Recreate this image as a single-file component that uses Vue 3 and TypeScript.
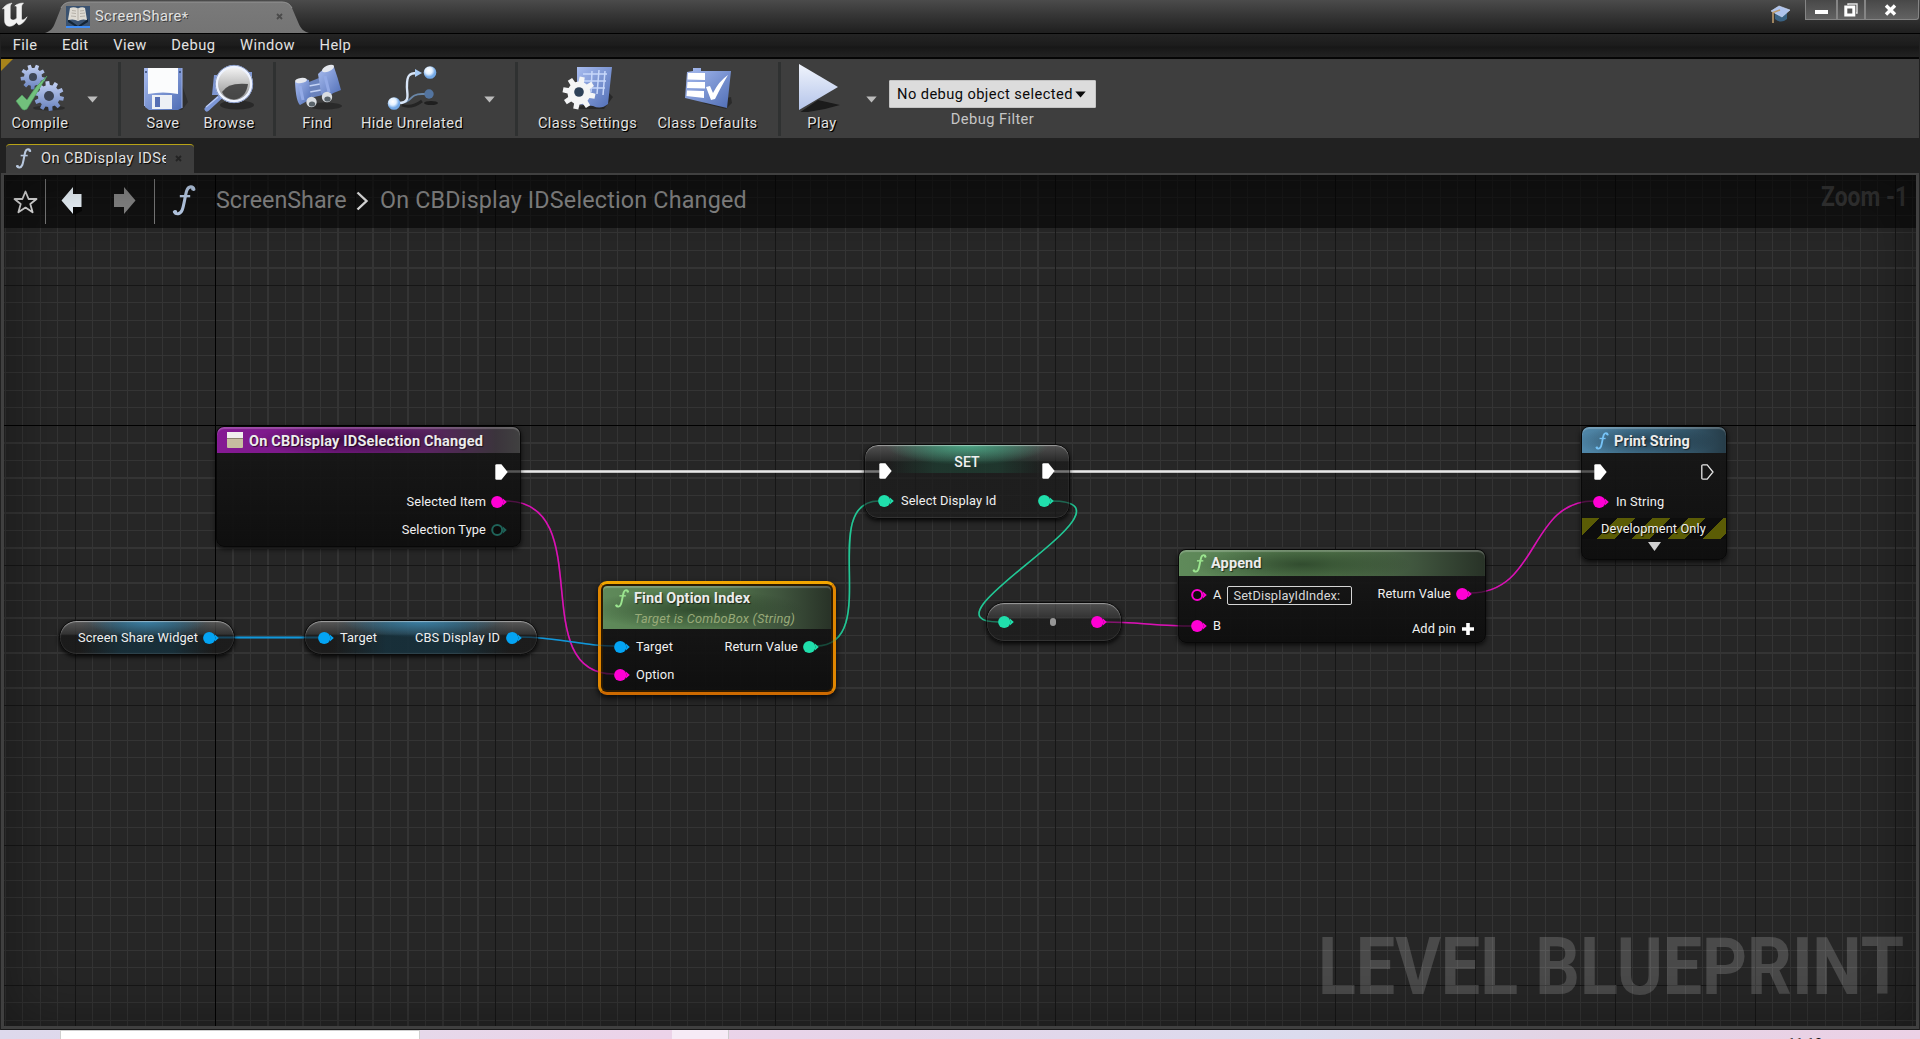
<script setup lang="ts">
interface Wire { d: string; color: string; width: number }

const menus: string[] = ['File', 'Edit', 'View', 'Debug', 'Window', 'Help']

const wires: Wire[] = [
  { d: 'M507 471.500H880', color: '#e8e8e8', width: 2.6 },
  { d: 'M1054 471.500H1595', color: '#e8e8e8', width: 2.6 },
  { d: 'M505 501C600 501 524 674 614 674', color: '#d912b4', width: 1.6 },
  { d: 'M217 637.500H319', color: '#1296d8', width: 1.8 },
  { d: 'M519 637C560 637 580 646 614 646', color: '#1296d8', width: 1.6 },
  { d: 'M816 646C884 646 816 501 879 501', color: '#22c795', width: 1.6 },
  { d: 'M1051 501C1153 501 910 622 999 622', color: '#22c795', width: 1.6 },
  { d: 'M1105 622C1135 622 1160 626 1192 626', color: '#d912b4', width: 1.6 },
  { d: 'M1470 593C1540 593 1528 501 1594 501', color: '#d912b4', width: 1.6 },
]

/* closed outline of a cog with the given centre, radii and tooth count */
function cog(cx: number, cy: number, outer: number, inner: number, teeth: number): string {
  const step = (Math.PI * 2) / teeth
  const pts: string[] = []
  for (let i = 0; i < teeth; i++) {
    const a = i * step + 0.2
    const corners: [number, number][] = [[-0.31, inner], [-0.2, outer], [0.2, outer], [0.31, inner]]
    for (const [k, r] of corners) {
      pts.push(`${(cx + r * Math.cos(a + k * step)).toFixed(1)} ${(cy + r * Math.sin(a + k * step)).toFixed(1)}`)
    }
  }
  return `M${pts.join('L')}Z`
}
</script>

<template>
  <div class="editor">
    <svg class="defs" width="0" height="0">
      <defs>
        <linearGradient id="steel" x1="0" y1="0" x2="0" y2="1"><stop offset="0" stop-color="#c6d3f4" /><stop offset="1" stop-color="#6680bd" /></linearGradient>
        <linearGradient id="blue" x1="0" y1="0" x2="1" y2="1"><stop offset="0" stop-color="#a9bdf0" /><stop offset="1" stop-color="#4f6db5" /></linearGradient>
        <linearGradient id="pale" x1="0" y1="0" x2="0" y2="1"><stop offset="0" stop-color="#f0f4fc" /><stop offset="1" stop-color="#b4c4ea" /></linearGradient>
        <linearGradient id="lens" x1="0" y1="0" x2="0" y2="1"><stop offset="0" stop-color="#f6f6f6" /><stop offset="1" stop-color="#8b8b8b" /></linearGradient>
        <radialGradient id="ball" cx=".4" cy=".35"><stop offset="0" stop-color="#fff" /><stop offset=".55" stop-color="#e2f0ff" /><stop offset="1" stop-color="#74a9e6" /></radialGradient>
      </defs>
      <symbol id="pin" viewBox="0 0 16 14"><circle cx="6.2" cy="7" r="6.1" fill="currentColor" /><path d="M11.6 3.2L15.8 7L11.6 10.8Q13.2 7 11.6 3.2Z" fill="currentColor" /></symbol>
      <symbol id="pin-open" viewBox="0 0 16 14"><circle cx="6.2" cy="7" r="5" fill="#0b0b0b" stroke="currentColor" stroke-width="2" /><path d="M11.6 3.2L15.8 7L11.6 10.8Q13.2 7 11.6 3.2Z" fill="currentColor" /></symbol>
      <symbol id="exec" viewBox="0 0 13 16"><path d="M.3 1.6Q.3.3 1.6.3H6.4L12.7 8L6.4 15.7H1.6Q.3 15.7.3 14.4Z" fill="#fff" /></symbol>
      <symbol id="func" viewBox="0 0 14 20"><path d="M13.4 2.8C12.8 .6 9.9 .5 8.8 3.5C7.8 6.3 7 13.4 5.8 16.2C4.6 19 1.8 19.2 .8 17.4" fill="none" stroke="currentColor" stroke-width="2" stroke-linecap="round" /><path d="M4.3 7.2H11" stroke="currentColor" stroke-width="1.5" /><circle cx="12.7" cy="2.5" r="1.1" fill="currentColor" /><circle cx="1.5" cy="17.3" r="1.1" fill="currentColor" /></symbol>
      <symbol id="caret" viewBox="0 0 11 7"><path d="M.3.5H10.7L5.5 6.5Z" fill="currentColor" /></symbol>
    </svg>

    <header class="titlebar">
      <svg class="logo" width="27" height="27" viewBox="0 0 27 27"><path d="M1.500 9C4 5 7.500 3.500 11 3.200C9.500 4.500 9.200 5.500 9.200 7V17.500C9.200 20.500 13.500 21 15.800 18V7.500C15.800 6.200 15 5.700 13.800 6C15.500 4.300 18.500 3.200 22.500 3C21.200 4.300 20.500 5.400 20.500 7V18C20.500 20.800 22.800 20.700 26 16.800C24.200 21.400 21 24 17.800 25L15.400 22.600C13.400 25.300 10.400 26.500 8 26.200C5.200 25.900 3.600 23.800 3.600 20.500V10.400C3.600 8.400 2.600 8.200 1.500 9Z" fill="#f2f2f2" stroke="#f2f2f2" stroke-width=".6" /></svg>
      <div class="doc-tab">
        <svg class="doc-shape" width="264" height="33" viewBox="0 0 264 33">
          <defs><linearGradient id="tabfill" x1="0" y1="0" x2="0" y2="1"><stop offset="0" stop-color="#7a7a7a" /><stop offset="1" stop-color="#747474" /></linearGradient></defs>
          <path d="M0 33C6 31 8 28 10 23L16 8Q19 2 26 2H237Q244 2 247 8L253 22C256 29 258 31 264 33Z" fill="url(#tabfill)" />
          <path d="M16 8Q19 2 26 2H237Q244 2 247 8" fill="none" stroke="#949494" />
        </svg>
        <svg class="doc-icon" width="24" height="22" viewBox="0 0 24 22"><rect width="24" height="22" fill="#3a5270" /><path d="M2 13L12 20L22 13V16L12 22L2 16Z" fill="#142536" /><path d="M4 2Q8 .5 12 2.5Q16 .5 19 2L21 14Q16 12.5 12 15Q8 12.5 2 14Z" fill="#dedbd3" /><path d="M12 3V14M6 4.5L10 5M5.500 7L10 7.500M5 10L10 10.500M14 5L18 4.500M14 7.500L19 7M14 10.500L19 10" stroke="#a9a59c" stroke-width=".8" /><path d="M0 21H24" stroke="#3f8df5" stroke-width="2" /></svg>
        <span class="doc-name">ScreenShare<i class="star">*</i></span>
        <svg class="doc-close" width="7" height="7" viewBox="0 0 7 7"><path d="M1 1L6 6M6 1L1 6" stroke="#4b4b4b" stroke-width="1.8" /></svg>
      </div>
      <div class="spacer"></div>
      <svg class="cap" width="20" height="20" viewBox="0 0 20 20"><path d="M4 8L4 14Q10 19 16 14V8Z" fill="#3a6283" /><path d="M0 6L8 1L19 5L11 12Z" fill="#afc4ee" stroke="#d4e0fa" stroke-width=".6" /><path d="M9 5L2 7.5V18" fill="none" stroke="#bb9a6b" stroke-width="1.6" /></svg>
      <div class="window-buttons">
        <span class="wb min"><svg width="13" height="4"><rect width="13" height="4" fill="#fff" /></svg></span>
        <span class="wb max"><svg width="14" height="14" viewBox="0 0 14 14"><path d="M4 2V1H13V10H12" fill="none" stroke="#e3e3e3" stroke-width="1.4" /><rect x="1.8" y="4" width="8" height="8" fill="none" stroke="#fff" stroke-width="3" /></svg></span>
        <span class="wb close"><svg width="13" height="12" viewBox="0 0 13 12"><path d="M2 1.5L11 10.5M11 1.5L2 10.5" stroke="#fff" stroke-width="3.4" /></svg></span>
      </div>
    </header>

    <nav class="menu"><span v-for="m in menus" :key="m">{{ m }}</span></nav>

    <section class="toolbar">
      <svg class="dirty" width="13" height="13"><path d="M0 0H12L0 12Z" fill="#a8841b" /></svg>
      <div class="tool w80">
        <svg width="52" height="50" viewBox="0 0 52 50"><ellipse cx="35" cy="46" rx="16" ry="2.5" fill="#222" opacity=".6" /><path :d="cog(19, 15, 12.5, 9, 9)" fill="url(#steel)" /><circle cx="19" cy="15" r="4" fill="#3f4858" /><path :d="cog(35, 34, 15, 11, 10)" fill="url(#steel)" /><circle cx="35" cy="34" r="5" fill="#3b4252" /><path d="M2 39L8 33L13 38Q22 23 33 14Q24 29 13 47Q10 49 8 47Z" fill="#72c07c" stroke="#4d9e60" stroke-width=".6" /></svg>
        <span>Compile</span>
      </div>
      <div class="drop"><svg width="11" height="7"><use href="#caret" /></svg></div>
      <i class="sep s1"></i>
      <div class="tool w66 m9">
        <svg width="52" height="50" viewBox="0 0 52 50"><path d="M44 20L51 40L45 48H14Z" fill="#222" opacity=".55" /><path d="M7 6H45V46L41 48H12L8 45Z" fill="url(#blue)" /><path d="M11 6H41V32Q26 29 11 32Z" fill="#fbfcfd" /><rect x="15" y="33" width="20" height="14" fill="#edf0f5" /><rect x="18" y="35" width="5" height="10" fill="#566fb4" /><path d="M7.5 6V44M45 6V46" stroke="#9fb1e4" stroke-width="1" /><circle cx="9" cy="10" r="1" fill="#31466f" /><circle cx="43" cy="10" r="1" fill="#31466f" /></svg>
        <span>Save</span>
      </div>
      <div class="tool w66">
        <svg width="52" height="50" viewBox="0 0 52 50"><ellipse cx="34" cy="43" rx="17" ry="4.5" fill="#1e1e1e" opacity=".65" /><path d="M11 13H17V33H9Z M42 10H49V27L43 30Z" fill="#7e96d2" /><path d="M4 47L17 35" stroke="#7d97d7" stroke-width="5" stroke-linecap="round" /><path d="M3 45L15 35" stroke="#b8c9f5" stroke-width="1.3" /><circle cx="31" cy="22" r="17.5" fill="url(#lens)" stroke="#eef3ff" stroke-width="3" /><circle cx="31" cy="22" r="18.7" fill="none" stroke="#7188bd" stroke-width=".8" /><path d="M19 30Q25 20 45 22Q43 36 31 37.5Q22 37 19 30Z" fill="#383838" opacity=".85" /></svg>
        <span>Browse</span>
      </div>
      <i class="sep s2"></i>
      <div class="tool w66 m8">
        <svg width="52" height="50" viewBox="0 0 52 50"><ellipse cx="34" cy="44" rx="17" ry="3.5" fill="#222" opacity=".7" /><path d="M18 20L28 16L32 33L19 36Z" fill="#6a83bd" /><path d="M18 24L29 22M19 30L30 28" stroke="#c4d3f5" stroke-width="1.5" /><path d="M27 12Q34 4 43 5Q47 16 50 28Q43 30 36 35Q31 34 30 31Z" fill="url(#blue)" /><path d="M4 20Q10 15 18 18Q19 28 20 37L9 43Q5 40 4 20Z" fill="url(#blue)" /><ellipse cx="10" cy="18.500" rx="6" ry="2.600" fill="#e5e8ee" transform="rotate(-8 10 18.500)" /><ellipse cx="37" cy="6.500" rx="6.500" ry="3" fill="#e5e8ee" transform="rotate(-24 37 6.500)" /><path d="M34 14L38 30M9 24L12 38" stroke="#93aae6" stroke-width="3" /><circle cx="20.500" cy="40" r="5.200" fill="#d9dde2" /><ellipse cx="21" cy="42" rx="3.200" ry="2.600" fill="#59636a" /><circle cx="36" cy="35" r="5.200" fill="#d9dde2" /><ellipse cx="36.500" cy="37" rx="3.200" ry="2.600" fill="#59636a" /></svg>
        <span>Find</span>
      </div>
      <div class="tool w124">
        <svg width="52" height="50" viewBox="0 0 52 50"><ellipse cx="45" cy="41" rx="7" ry="2" fill="#1f1f1f" /><path d="M16 43Q25 47 36 39" stroke="#242424" stroke-width="3" fill="none" /><path d="M14 41C27 41 22 32 36 32H40" fill="none" stroke="#6a87a8" stroke-width="1.8" /><path d="M13 41C26 41 20 30 21 23C21 14 23 11 31 11" fill="none" stroke="#d9e6f8" stroke-width="2.4" /><path d="M29 7L36 11L29 15Z" fill="#a9ccf5" /><circle cx="43" cy="32" r="4.7" fill="#53749f" /><circle cx="44" cy="10.5" r="6.3" fill="url(#ball)" /><circle cx="8" cy="41.5" r="6.3" fill="url(#ball)" /></svg>
        <span>Hide Unrelated</span>
      </div>
      <div class="drop m3"><svg width="11" height="7"><use href="#caret" /></svg></div>
      <i class="sep s1"></i>
      <div class="tool w121 m9">
        <svg width="52" height="50" viewBox="0 0 52 50"><path d="M46 30L51 35L42 47H14Z" fill="#1f1f1f" opacity=".7" /><path d="M15 5H50L46 42Q39 48 31 44L15 42Z" fill="url(#blue)" /><path d="M21 12H45M20 19H44M19 26H43M37 8L35 32M43 9L41 33M30 9L29 30" stroke="#c8d8fa" stroke-width="1.500" fill="none" /><path :d="cog(17, 31, 16.5, 11.5, 8)" fill="#f4f5f6" /><circle cx="17" cy="30" r="4.8" fill="#2d4158" /></svg>
        <span>Class Settings</span>
      </div>
      <div class="tool w119">
        <svg width="52" height="50" viewBox="0 0 52 50"><path d="M49 35L50 41L44 47L20 41Z" fill="#222" opacity=".7" /><path d="M5 10L11 9V6H19V9H49L45 46L3 36Z" fill="url(#blue)" /><path d="M6 11H23V18L5.500 17.500ZM5.500 20H23V26.500L5 26ZM5 28.500L22 29V36L4.500 34Z" fill="#fff" /><path d="M24 25L28 24L31 31Q37 19 46 13Q40 23 33 37L29 38Z" fill="#fff" /></svg>
        <span>Class Defaults</span>
      </div>
      <i class="sep s2"></i>
      <div class="tool w66 m8">
        <svg width="52" height="50" viewBox="0 0 52 50"><path d="M3 51L22 38L44 43Q25 49 3 51Z" fill="#1b1b1b" /><path d="M3 2L42 25L3 48Z" fill="url(#pale)" /></svg>
        <span>Play</span>
      </div>
      <div class="drop m4"><svg width="11" height="7"><use href="#caret" /></svg></div>
      <div class="debug">
        <div class="select"><span>No debug object selected</span><svg width="11" height="7"><use href="#caret" /></svg></div>
        <span class="caption">Debug Filter</span>
      </div>
    </section>

    <section class="tabs">
      <div class="tab"><svg width="17" height="21" class="f"><use href="#func" /></svg><span>On CBDisplay IDSe</span><svg width="7" height="7" viewBox="0 0 7 7"><path d="M1 1L6 6M6 1L1 6" stroke="#232323" stroke-width="1.8" /></svg></div>
    </section>

    <main class="graph">
      <div class="canvas">
        <svg class="wires" width="1912" height="851" viewBox="4 175 1912 851">
          <path v-for="w in wires" :key="w.d" :d="w.d" :stroke="w.color" :stroke-width="w.width" fill="none" />
        </svg>

        <div class="node event">
          <div class="head purple"><svg width="16" height="16" viewBox="0 0 16 16"><rect width="16" height="16" rx="1" fill="#c6bda0" /><rect width="16" height="6" fill="#f0eeee" /><path d="M0 6.500H16" stroke="#8c8370" /></svg><b>On CBDisplay IDSelection Changed</b></div>
          <div class="row r32 end"><svg class="ex" width="13" height="16"><use href="#exec" /></svg></div>
          <div class="row r26 end"><span>Selected Item</span><svg class="pink" width="16" height="14"><use href="#pin" /></svg></div>
          <div class="row r30 end"><span>Selection Type</span><svg class="dim" width="16" height="14"><use href="#pin-open" /></svg></div>
        </div>

        <div class="pill share"><span>Screen Share Widget</span><svg class="sky" width="16" height="14"><use href="#pin" /></svg></div>
        <div class="pill cbs"><svg class="sky" width="16" height="14"><use href="#pin" /></svg><span>Target</span><i class="spacer"></i><span>CBS Display ID</span><svg class="sky" width="16" height="14"><use href="#pin" /></svg></div>

        <div class="node find">
          <div class="head green tall"><svg width="14" height="19" class="fg"><use href="#func" /></svg><div><b>Find Option Index</b><em>Target is ComboBox (String)</em></div></div>
          <div class="row r28"><svg class="sky" width="16" height="14"><use href="#pin" /></svg><span>Target</span><i class="spacer"></i><span>Return Value</span><svg class="mint" width="16" height="14"><use href="#pin" /></svg></div>
          <div class="row r28"><svg class="pink" width="16" height="14"><use href="#pin" /></svg><span>Option</span></div>
        </div>

        <div class="pill set">
          <div class="row exec-row"><svg width="13" height="16"><use href="#exec" /></svg><b>SET</b><svg width="13" height="16"><use href="#exec" /></svg></div>
          <div class="row r30"><svg class="mint" width="16" height="14"><use href="#pin" /></svg><span>Select Display Id</span><i class="spacer"></i><svg class="mint" width="16" height="14"><use href="#pin" /></svg></div>
        </div>

        <div class="pill conv"><svg class="mint" width="16" height="14"><use href="#pin" /></svg><i class="dot"></i><svg class="pink" width="16" height="14"><use href="#pin" /></svg></div>

        <div class="node append">
          <div class="head green"><svg width="15" height="19" class="fg"><use href="#func" /></svg><b>Append</b></div>
          <div class="cols">
            <div class="left">
              <div class="row"><svg class="pink" width="16" height="14"><use href="#pin-open" /></svg><span>A</span><span class="box">SetDisplayIdIndex:</span></div>
              <div class="row"><svg class="pink" width="16" height="14"><use href="#pin" /></svg><span>B</span></div>
            </div>
            <div class="right">
              <div class="row"><span>Return Value</span><svg class="pink" width="16" height="14"><use href="#pin" /></svg></div>
              <div class="row add"><span>Add pin</span><svg width="12" height="12" viewBox="0 0 12 12"><path d="M4.200 0H7.800V4.200H12V7.800H7.800V12H4.200V7.800H0V4.200H4.200Z" fill="#fff" /></svg></div>
            </div>
          </div>
        </div>

        <div class="node print">
          <div class="head azure"><svg width="14" height="18" class="fb"><use href="#func" /></svg><b>Print String</b></div>
          <div class="row r32"><svg width="13" height="16"><use href="#exec" /></svg><i class="spacer"></i><svg class="ex" width="13" height="16" viewBox="0 0 13 16"><path d="M.8 2Q.8.8 2 .8H6.200L12 8L6.200 15.200H2Q.8 15.200.8 14Z" fill="none" stroke="#e6e6e6" stroke-width="1.300" /></svg></div>
          <div class="row r26"><svg class="pink" width="16" height="14"><use href="#pin" /></svg><span>In String</span></div>
          <div class="dev"><span>Development Only</span></div>
          <svg class="expand" width="13" height="9" viewBox="0 0 13 9"><path d="M0 0H13L6.500 9Z" fill="#d0d0d0" /></svg>
        </div>

        <svg class="wires ghost" width="1912" height="851" viewBox="4 175 1912 851">
          <path v-for="w in wires" :key="w.d" :d="w.d" :stroke="w.color" :stroke-width="w.width" fill="none" />
        </svg>

        <svg class="watermark" width="608" height="100" viewBox="0 0 608 100"><text x="10" y="76" textLength="586" lengthAdjust="spacingAndGlyphs">LEVEL BLUEPRINT</text></svg>

        <div class="crumbs">
          <svg width="25" height="24" viewBox="0 0 25 24"><path d="M12.500 1.500L15.600 9H23.500L17.300 14L19.600 22.300L12.500 17.600L5.400 22.300L7.700 14L1.500 9H9.400Z" fill="none" stroke="#dedede" stroke-width="1.800" stroke-linejoin="round" /></svg>
          <i class="bar"></i>
          <svg class="back" width="22" height="30" viewBox="0 0 22 30"><path d="M8 26L11 20H21V25L13 29Z" fill="#000" opacity=".6" /><path d="M.5 14.500L12 1V8H20.500V21H12V28Z" fill="#e8f1f8" /></svg>
          <svg class="fwd" width="23" height="30" viewBox="0 0 23 30"><path d="M22.500 14.500L11 1V8H1V21H11V28Z" fill="#828282" /></svg>
          <i class="bar"></i>
          <svg class="bigf" width="24" height="31"><use href="#func" /></svg>
          <span class="c1">ScreenShare</span>
          <svg class="chev" width="13" height="20" viewBox="0 0 13 20"><path d="M1.500 1.500L10.500 10L1.500 18.500" fill="none" stroke="#e0e0e0" stroke-width="2.400" /></svg>
          <span class="c2">On CBDisplay IDSelection Changed</span>
          <i class="spacer"></i>
          <svg class="zoom" width="96" height="40" viewBox="0 0 96 40"><text x="5" y="28" textLength="87" lengthAdjust="spacingAndGlyphs">Zoom -1</text></svg>
        </div>
      </div>
    </main>

    <footer class="taskbar"><div class="search"></div><div class="task"></div><span class="clock">11:12</span></footer>
  </div>
</template>

<style>
body { margin: 0; background: #212121; }
</style>

<style scoped>
* { box-sizing: border-box; }
svg { display: block; flex: none; }
.editor { width: 1920px; height: 1039px; overflow: hidden; display: flex; flex-direction: column; background: #212121; color: #e2e2e2; font: 14.67px/18px Roboto, "Liberation Sans", sans-serif; letter-spacing: .42px; white-space: nowrap; }
.defs { position: absolute; }
.spacer { flex: 1; }

.titlebar { height: 34px; flex: none; display: flex; background: linear-gradient(#4b4b4b 0, #363636 15px, #202020 32px); border-bottom: 1px solid #000; }
.logo { margin-left: 1px; }
.doc-tab { position: relative; width: 264px; height: 33px; margin-left: 17px; display: flex; }
.doc-shape { position: absolute; left: 0; top: 0; }
.doc-icon { position: relative; margin: 6px 0 0 21px; }
.doc-name { position: relative; margin: 7px 0 0 5px; width: 95px; text-shadow: 1px 1px #3c3c3c; }
.star { font-style: normal; position: relative; top: 2px; }
.doc-close { position: relative; margin: 13px 0 0 86px; }
.cap { margin: 5px 14px 0 0; }
.window-buttons { display: flex; margin-right: 1px; }
.wb { height: 20px; display: flex; justify-content: center; align-items: center; border: 1px solid #858585; border-top: 0; background: linear-gradient(#484848, #626262); }
.min { width: 32px; align-items: flex-end; padding-bottom: 5px; }
.max { width: 28px; }
.close { width: 54px; padding-right: 4px; border-radius: 0 0 3px 0; }

.menu { height: 25px; flex: none; display: flex; padding: 2px 0 0; margin: 0 1px; background: linear-gradient(#242424 0, #1c1c1c 11px, #171717 13px, #222 23px); border-bottom: 2px solid #050505; }
.menu span { padding: 0 13px 0 11.7px; line-height: 18px; }

.toolbar { position: relative; height: 79px; flex: none; display: flex; background: #3e3e3e; margin-right: 1px; border-left: 1px solid #222; }
.dirty { position: absolute; left: 0; top: 0; }
.tool { display: flex; flex-direction: column; align-items: center; padding-top: 3px; }
.tool span { text-shadow: 1px 1px 1px #000, 1px 1px #000; line-height: 20px; margin-top: 1px; }
.w80 { width: 78px; margin-right: 1px; }
.w66 { width: 66px; }
.w119 { width: 119px; }
.w121 { width: 121px; }
.w124 { width: 124px; }
.m3 { margin-left: 3px; }
.m4 { margin-left: 4px; }
.m8 { margin-left: 8px; }
.m9 { margin-left: 9px; }
.drop { width: 26px; display: flex; justify-content: center; padding: 37px 1px 0 0; color: #bcbcbc; }
.sep { width: 3px; height: 74px; margin-top: 3px; background: #2f3131; }
.s1 { margin-left: 12px; }
.s2 { margin-left: 11px; }
.debug { width: 207px; margin-left: 4px; padding-top: 21px; display: flex; flex-direction: column; align-items: center; }
.select { width: 207px; height: 28px; flex: none; display: flex; align-items: center; justify-content: space-between; padding: 0 9px 0 7px; background: #dcdcdc; border: 1px solid #c4c4c4; border-radius: 1px; color: #0a0a0a; }
.caption { margin-top: 2px; color: #c6c6c6; }

.tabs { height: 35px; flex: none; display: flex; padding: 6px 0 0 6px; }
.tab { width: 188px; height: 29px; display: flex; align-items: center; background: #3d3d3d; border-top: 1px solid #b8a316; border-radius: 4px 4px 0 0; padding: 0 0 2px 9px; }
.tab span { width: 125px; overflow: hidden; margin: 0 9px 0 9px; text-shadow: 1px 1px 1px #000; }
.f { color: #b8c8de; }

.graph { height: 857px; flex: none; margin-right: 1px; margin-left: 1px; padding: 2px 3px 3px; background: #404040; border-bottom: 1px solid #191919; }
.canvas {
  position: relative; width: 1912px; height: 851px; overflow: hidden; background-color: #262626;
  background-image:
    linear-gradient(#000, #000), linear-gradient(#000, #000),
    repeating-linear-gradient(90deg, #161616 0 1px, transparent 1px 140px),
    repeating-linear-gradient(#161616 0 1px, transparent 1px 140px),
    repeating-linear-gradient(90deg, #343434 0 1px, transparent 1px 17.5px),
    repeating-linear-gradient(#343434 0 1px, transparent 1px 17.5px);
  background-repeat: no-repeat, no-repeat, repeat, repeat, repeat, repeat;
  background-position: 211px 0, 0 250px, -69px 0, 0 -30px, -69px 0, 0 -30px;
  background-size: 1px 100%, 100% 1px, 2100px 100%, 100% 1120px, 2100px 100%, 100% 1120px;
}
.canvas::after { content: ""; position: absolute; inset: 0; pointer-events: none; box-shadow: inset 0 0 60px rgba(0, 0, 0, .38); }
.wires { position: absolute; left: 0; top: 0; }
.ghost { opacity: .25; }

.node, .pill { position: absolute; color: #f0f0f0; font-size: 12.8px; line-height: 16px; letter-spacing: .11px; }
.node { display: flex; flex-direction: column; background: linear-gradient(rgba(24, 24, 24, .93), rgba(13, 13, 13, .93)); border: 1px solid #080808; border-radius: 8px; box-shadow: 0 2px 5px rgba(0, 0, 0, .75); }
.head { height: 26px; display: flex; align-items: center; border-radius: 7px 7px 0 0; box-shadow: inset 0 2px 1px rgba(255, 255, 255, .22); flex: none; }
.head b { font-size: 14.5px; font-weight: 700; color: #ececec; text-shadow: 1px 1px 1px rgba(0, 0, 0, .6); }
.purple { background: radial-gradient(ellipse 100px 16px at 45% 50%, rgba(30, 3, 36, .65), transparent), linear-gradient(90deg, #851a94 0, #731a7f 45%, #592460 70%, #3b343c 92%, #404040); }
.green { background: radial-gradient(ellipse 110px 20px at 40% 55%, rgba(25, 45, 25, .6), transparent), linear-gradient(90deg, #5f8a5a, #54784d 50%, #3f543d 78%, #283227); }
.azure { background: radial-gradient(ellipse 70px 16px at 45% 55%, rgba(15, 30, 40, .55), transparent), linear-gradient(90deg, #4f86a8, #42708b 50%, #263c48); }
.fg { color: #9be58f; }
.fb { color: #76c3f6; }
.row { display: flex; align-items: center; flex: none; }
.end { justify-content: flex-end; }
.r26 { height: 26px; }
.r28 { height: 28px; }
.r30 { height: 30px; }
.r32 { height: 32px; }
.pink { color: #ff00d4; }
.sky { color: #04a4f4; }
.mint { color: #20dfac; }
.dim { color: #1f6359; }

.event { left: 212px; top: 251px; width: 305px; height: 121px; }
.event .head { margin-bottom: 3px; padding: 2px 0 0 10px; gap: 6px; }
.event .head svg { margin-top: -2px; }
.event .head b { letter-spacing: .2px; margin-top: 1px; }
.event .row { padding-right: 13px; gap: 5px; }
.event .r26 { padding-top: 1px; }
.event .r30 { padding-top: 1px; }
.event .ex { margin-right: -1px; }

.print { left: 1577px; top: 251px; width: 146px; height: 134px; }
.print .head { margin-bottom: 3px; padding: 2px 0 0 13px; gap: 5px; }
.print .head b { margin-top: 1px; }
.print .row { padding: 0 12px 0 12px; gap: 7px; }
.print .r26 { padding: 1px 12px 0 11px; }
.dev { height: 21px; margin: 4px 0 3px; display: flex; justify-content: center; align-items: center; background: repeating-linear-gradient(135deg, #5b5c05 0 12.5px, #0d0d0d 12.5px 25px); text-shadow: 1px 1px 1px #000; }
.dev span { margin-right: 1px; }
.expand { align-self: center; }

.append { left: 1174px; top: 374px; width: 308px; height: 94px; }
.append .head { height: 26px; padding: 1px 0 0 13px; gap: 4px; }
.cols { display: flex; justify-content: space-between; padding: 3px 13px 0 12px; }
.left .row { height: 31px; gap: 6px; }
.left .row:first-child { padding-top: 1px; }
.box { width: 125px; height: 19px; border: 1px solid #d5d5d5; border-radius: 2px; padding-left: 5px; line-height: 17px; letter-spacing: .12px; color: #d8d8d8; }
.right { display: flex; flex-direction: column; align-items: flex-end; padding-top: 1px; }
.right .row { height: 28px; gap: 5px; }
.right .add { height: 42px; gap: 6px; margin-right: -2px; }

.find { left: 594px; top: 406px; width: 238px; height: 114px; border: 3px solid; border-color: #f2a600 #e08600 #cd6a00; border-radius: 9px; padding: 2px; box-shadow: inset 0 0 0 2px #2b1a02, 0 3px 6px rgba(0, 0, 0, .8); }
.tall { height: 43px; align-items: flex-start; padding: 3px 0 0 12px; gap: 5px; border-radius: 4px 4px 0 0; }
.tall div { display: flex; flex-direction: column; padding-top: 1px; }
.tall b { line-height: 18px; }
.tall em { font-size: 12.8px; line-height: 18px; margin-top: 2px; letter-spacing: .19px; color: #98aa78; }
.find .row { padding: 0 12px 0 11px; gap: 6px; }
.find .tall + .row { margin-top: 4px; }
.find .mint { margin-left: -1px; }

.pill { display: flex; align-items: center; background: linear-gradient(rgba(120, 120, 120, .5) 0, rgba(65, 65, 65, .5) 38%, rgba(25, 25, 25, .6) 42%, rgba(25, 25, 25, .6)); border: 1px solid #0a0a0a; border-radius: 18px; box-shadow: inset 0 1px 1px rgba(255, 255, 255, .45), inset 0 -1px 1px rgba(255, 255, 255, .1), 0 2px 4px rgba(0, 0, 0, .8); }
.share, .cbs { top: 445px; height: 35px; background: radial-gradient(ellipse 34% 50% at 50% 0, rgba(58, 140, 185, .8), transparent), linear-gradient(90deg, transparent 12%, rgba(20, 65, 85, .5) 35%, rgba(20, 65, 85, .5) 65%, transparent 88%), linear-gradient(rgba(105, 105, 105, .75) 0, rgba(55, 55, 55, .75) 40%, rgba(26, 26, 26, .85) 43%, rgba(26, 26, 26, .85)); }
.share { left: 55px; width: 176px; justify-content: flex-end; padding-right: 15px; gap: 5px; }
.cbs { left: 300px; width: 234px; padding: 0 15px 0 14px; gap: 6px; }
.cbs .sky:first-child { margin-left: -1px; }
.set { left: 860px; top: 269px; width: 206px; height: 75px; flex-direction: column; align-items: stretch; border-radius: 14px; padding: 11px 14px 0; background: radial-gradient(ellipse 40% 20px at 50% 0, rgba(80, 190, 150, .75), transparent), linear-gradient(90deg, transparent 12%, rgba(32, 90, 68, .4) 35%, rgba(32, 90, 68, .4) 65%, transparent 88%) 0 0 / 100% 28px no-repeat, linear-gradient(rgba(100, 100, 100, .7) 0, rgba(48, 48, 48, .7) 15px, rgba(27, 27, 27, .75) 17px, rgba(27, 27, 27, .75)); }
.exec-row { height: 30px; justify-content: space-between; }
.exec-row b { align-self: flex-start; margin: -3px 0 0; font-size: 14px; font-weight: 500; line-height: 18px; }
.set .r30 { gap: 7px; margin-left: -1px; margin-right: 1px; }
.conv { left: 982px; top: 427px; width: 136px; height: 40px; justify-content: space-between; padding: 0 14px 0 11px; }
.dot { width: 6px; height: 8px; border-radius: 3px; background: #979797; margin-left: 1px; }

.watermark { position: absolute; left: 1304px; top: 743px; }
.watermark text { font: 700 80px Roboto, sans-serif; letter-spacing: 0; fill: #fff; fill-opacity: .17; }

.crumbs { position: absolute; left: 0; top: 0; width: 1912px; height: 53px; display: flex; align-items: center; background: rgba(0, 0, 0, .55); padding-left: 9px; color: #828282; font-size: 23.3px; letter-spacing: 0; }
.bar { width: 1px; height: 45px; background: #777; margin-left: 7px; }
.back { margin: -2px 0 0 15px; }
.fwd { margin: -2px 11px 0 30px; }
.bigf { color: #b6c9e4; margin: -2px 20px 0 17px; }
.c1 { width: 131px; margin-top: -3px; }
.chev { margin: -2px 11px 0 9px; }
.c2 { margin-top: -3px; letter-spacing: .19px; }
.zoom { margin: -8px 4px 0 0; }
.zoom text { font: 700 28px Roboto, sans-serif; fill: #303030; }

.taskbar { height: 9px; flex: none; display: flex; overflow: hidden; background: linear-gradient(90deg, #ddd9ec 0, #e6d8ea 420px, #ecd3e9 660px, #e5d5e9 900px, #dbdcee 1300px, #e3d4e5 1560px, #ecd1e6); }
.search { width: 360px; height: 9px; margin-left: 60px; background: #fff; border: solid #cfcfcf; border-width: 1px 1px 0; }
.task { width: 57px; margin-left: 252px; background: #f6ebf6; border-right: 1px solid #ccc; }
.clock { margin: 4px 0 0 1059px; color: #111; font-size: 13px; }
</style>
